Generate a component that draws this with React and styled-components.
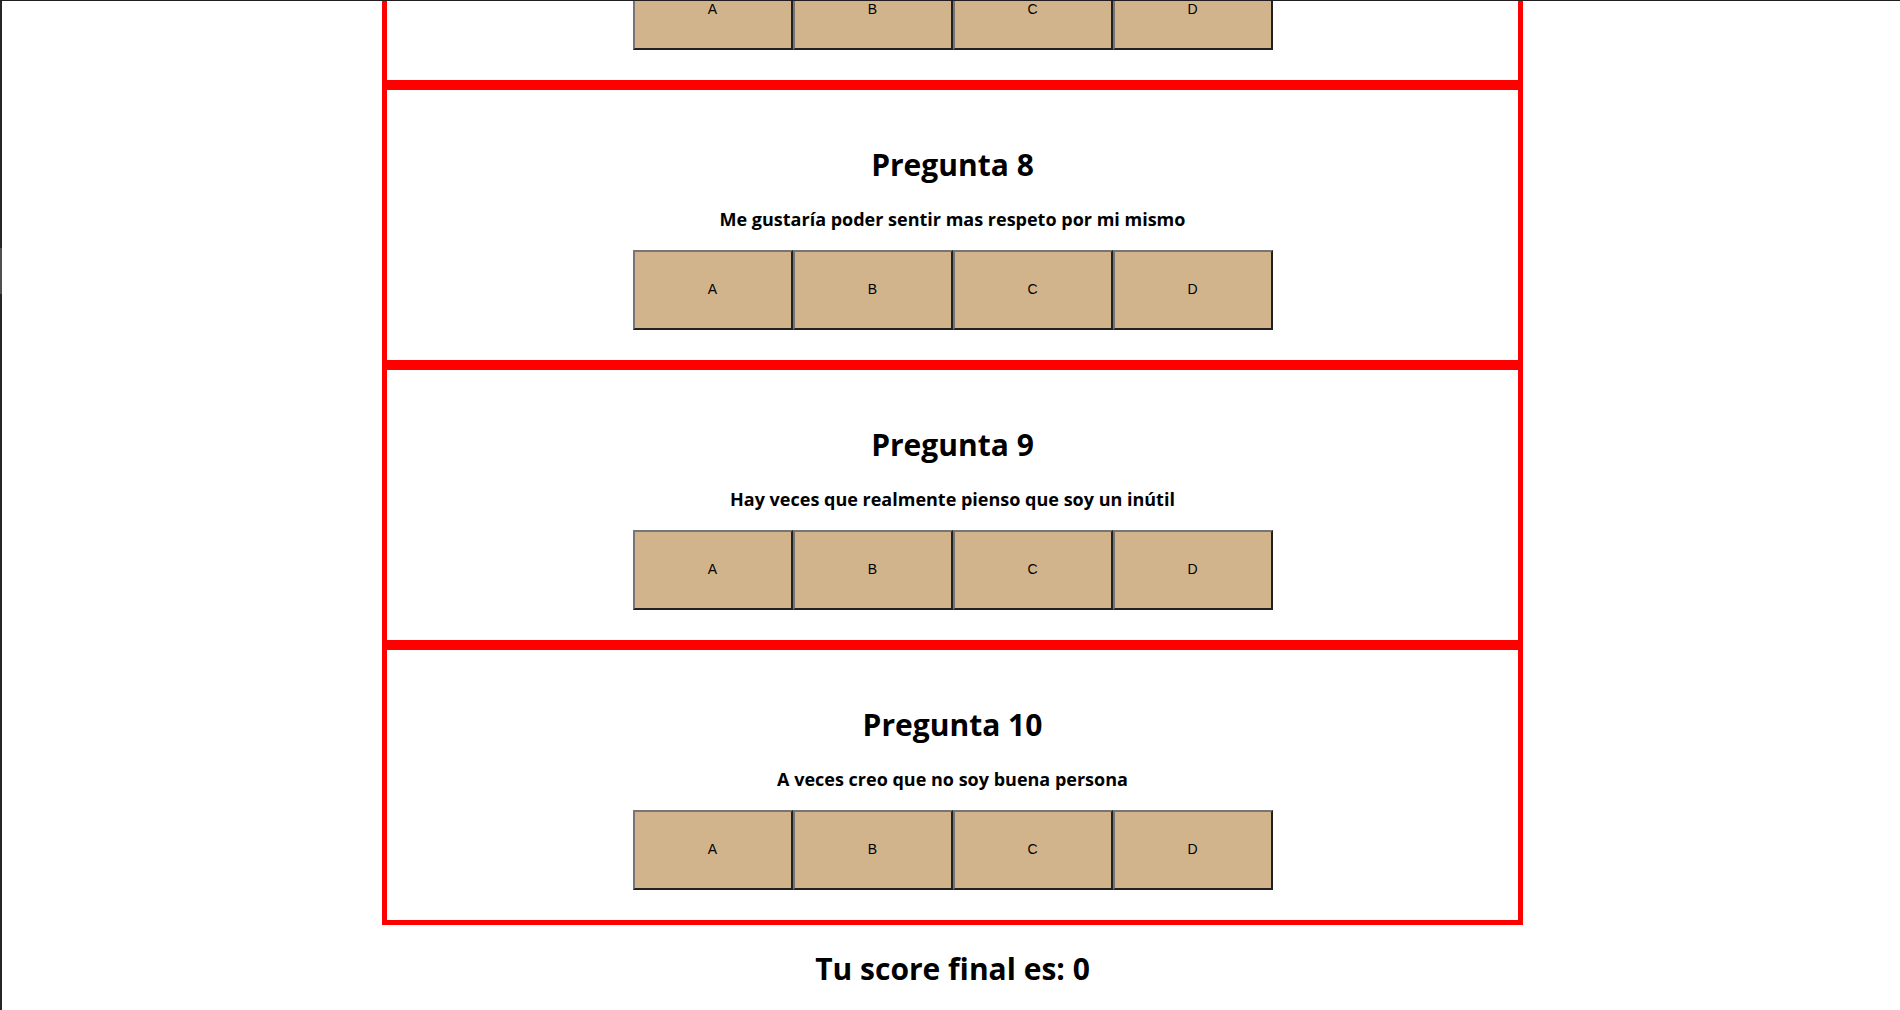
import React from "react";
import styled, { createGlobalStyle } from "styled-components";

const GlobalStyle = createGlobalStyle`
  *, *::before, *::after { box-sizing: border-box; }
  body {
    margin: 0;
    background: #fff;
    color: #000;
    font-family: "Open Sans", "Noto Sans", sans-serif;
  }
`;

const Page = styled.div`
  display: flex;
  min-height: 100vh;
  border-top: 1px solid #1f1d20;
`;

const Rail = styled.div`
  flex: none;
  width: 2px;
  padding-top: 247px;
  background: #262626;
`;

const RailThumb = styled.div`
  height: 46px;
  background: #4f4f4f;
`;

const Quiz = styled.main`
  flex: 1;
  display: flex;
  flex-direction: column;
  align-items: center;
  padding-left: 3px;
`;

const Card = styled.section`
  display: flex;
  flex-direction: column;
  align-items: center;
  justify-content: flex-end;
  width: calc(60% + 4px);
  height: ${(p) => (p.$scrolled ? "84px" : "auto")};
  padding: ${(p) => (p.$scrolled ? "0 30px 30px" : "53px 30px 30px")};
  border: 5px solid #f00;
  border-top-width: ${(p) => (p.$scrolled ? "0" : "5px")};
  overflow: hidden;
`;

const Title = styled.h1`
  margin: 0;
  font-size: 30px;
  line-height: 44px;
  font-weight: 700;
`;

const Statement = styled.h3`
  margin: 19px 0 18px;
  font-size: 18px;
  line-height: 26px;
  font-weight: 700;
`;

const Score = styled(Title)`
  margin: 22px 0;
`;

const Answers = styled.div`
  display: flex;
  justify-content: center;
`;

const Answer = styled.button`
  flex: none;
  width: 160px;
  height: 80px;
  padding: 0 0 2px;
  border: 2px solid;
  border-color: #767676 #212121 #212121 #767676;
  border-radius: 0;
  background: #d2b48c;
  color: #000;
  font: 14px "Liberation Sans", Arial, sans-serif;
`;

const OPTIONS = ["A", "B", "C", "D"];

const QUESTIONS = [
  { number: 8, text: "Me gustaría poder sentir mas respeto por mi mismo" },
  { number: 9, text: "Hay veces que realmente pienso que soy un inútil" },
  { number: 10, text: "A veces creo que no soy buena persona" },
];

function AnswerRow() {
  return (
    <Answers>
      {OPTIONS.map((option) => (
        <Answer key={option} type="button">{option}</Answer>
      ))}
    </Answers>
  );
}

export default function App() {
  return (
    <>
      <GlobalStyle />
      <Page>
        <Rail>
          <RailThumb />
        </Rail>
        <Quiz>
          <Card $scrolled>
            <AnswerRow />
          </Card>
          {QUESTIONS.map((q) => (
            <Card key={q.number}>
              <Title>Pregunta {q.number}</Title>
              <Statement>{q.text}</Statement>
              <AnswerRow />
            </Card>
          ))}
          <Score>Tu score final es: 0</Score>
        </Quiz>
      </Page>
    </>
  );
}
